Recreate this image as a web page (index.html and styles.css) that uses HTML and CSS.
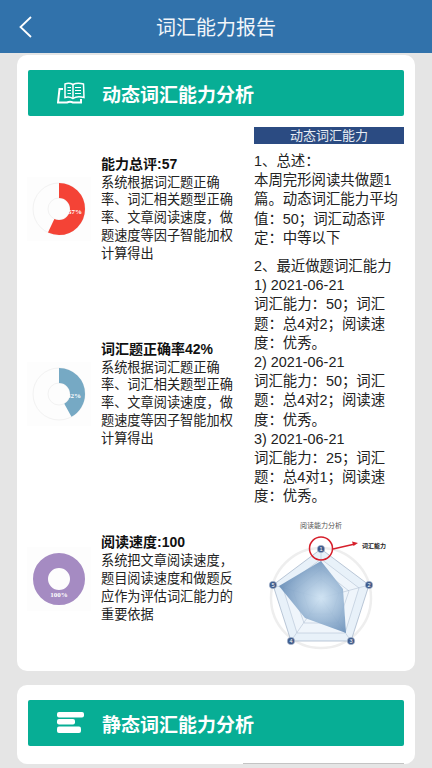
FILE: index.html
```html
<!DOCTYPE html>
<html lang="zh-CN">
<head>
    <meta charset="UTF-8">
    <meta name="viewport" content="width=device-width, initial-scale=1.0">
    <title>词汇能力报告</title>
    <link rel="stylesheet" href="styles.css">
</head>
<body>

    <header class="top-bar">
        <svg class="back-icon" viewBox="0 0 16 24" width="16" height="24">
            <path d="M13 2 L2.5 12 L13 22" fill="none" stroke="#fff" stroke-width="1.8"/>
        </svg>
        <h1 class="page-title">词汇能力报告</h1>
    </header>

    <main class="page">
        <section class="card">
            <div class="section-bar">
                <svg class="section-icon" viewBox="0 0 28 22" width="28" height="22">
                    <g fill="none" stroke="#fff">
                        <path d="M6 7 L2.500 7 L1 20.500 L10 20.500 Q13 19 16 20.500 L24 20.500 L24 17" stroke-width="2"/>
                        <path d="M8 2 Q12 0.500 16 2.500 Q20 0.500 26.500 2 L27 15.500 Q20 13.500 16 16.500 Q12 14 8 15.500 Z" stroke-width="1.500"/>
                        <path d="M16 2.500 L16 16.500" stroke-width="1.500"/>
                        <path d="M10.500 5.500 L14 5.500 M10.500 8.500 L14 8.500 M10.500 11.500 L14 11.500 M18 5.500 L24 5.500 M18 8.500 L24 8.500 M18 11.500 L24 11.500" stroke-width="1.200"/>
                    </g>
                </svg>
                <h2 class="section-title">动态词汇能力分析</h2>
            </div>

            <div class="analysis">
                <div class="factors">
                    <div class="factor">
                        <svg class="donut" viewBox="0 0 64 64" width="64" height="64">
                            <circle cx="32" cy="32" r="26" class="donut-edge"/>
                            <circle cx="32" cy="32" r="11" class="donut-edge"/>
                            <circle cx="32" cy="32" r="18.500" class="donut-value" stroke="#f44336" pathLength="100" stroke-dasharray="57 100" transform="rotate(-90 32 32)"/>
                            <text x="48" y="37" class="donut-label">57%</text>
                        </svg>
                        <div class="factor-text">
                            <h3 class="factor-title">能力总评:57</h3>
                            <p>系统根据词汇题正确率、词汇相关题型正确率、文章阅读速度&#xFF0C;做题速度等因子智能加权计算得出</p>
                        </div>
                    </div>

                    <div class="factor">
                        <svg class="donut" viewBox="0 0 64 64" width="64" height="64">
                            <circle cx="32" cy="32" r="26" class="donut-edge"/>
                            <circle cx="32" cy="32" r="11" class="donut-edge"/>
                            <circle cx="32" cy="32" r="18.500" class="donut-value" stroke="#76a9c4" pathLength="100" stroke-dasharray="42 100" transform="rotate(-90 32 32)"/>
                            <text x="47" y="36" class="donut-label">42%</text>
                        </svg>
                        <div class="factor-text">
                            <h3 class="factor-title">词汇题正确率42%</h3>
                            <p>系统根据词汇题正确率、词汇相关题型正确率、文章阅读速度&#xFF0C;做题速度等因子智能加权计算得出</p>
                        </div>
                    </div>

                    <div class="factor">
                        <svg class="donut" viewBox="0 0 64 64" width="64" height="64">
                            <circle cx="32" cy="32" r="18.500" class="donut-value" stroke="#a58bc2"/>
                            <text x="32" y="50" class="donut-label">100%</text>
                        </svg>
                        <div class="factor-text">
                            <h3 class="factor-title">阅读速度:100</h3>
                            <p>系统把文章阅读速度&#xFF0C;题目阅读速度和做题反应作为评估词汇能力的重要依据</p>
                        </div>
                    </div>
                </div>

                <aside class="summary">
                    <div class="summary-head">动态词汇能力</div>
                    <p>1、总述&#xFF1A;<br>本周完形阅读共做题1篇。动态词汇能力平均值&#xFF1A;50&#xFF1B;词汇动态评定&#xFF1A;中等以下</p>
                    <p class="summary-recent">2、最近做题词汇能力<br>1) 2021-06-21<br>词汇能力&#xFF1A;50&#xFF1B;词汇题&#xFF1A;总4对2&#xFF1B;阅读速度&#xFF1A;优秀。<br>2) 2021-06-21<br>词汇能力&#xFF1A;50&#xFF1B;词汇题&#xFF1A;总4对2&#xFF1B;阅读速度&#xFF1A;优秀。<br>3) 2021-06-21<br>词汇能力&#xFF1A;25&#xFF1B;词汇题&#xFF1A;总4对1&#xFF1B;阅读速度&#xFF1A;优秀。</p>

                    <svg class="radar" viewBox="0 0 150 150" width="150" height="150">
                        <defs>
                            <radialGradient id="radarFill" gradientUnits="userSpaceOnUse" cx="67" cy="88" r="48">
                                <stop offset="0" stop-color="#cfe3f3"/>
                                <stop offset="1" stop-color="#5b83b0"/>
                            </radialGradient>
                        </defs>
                        <text x="67" y="18" class="radar-title">阅读能力分析</text>
                        <circle cx="67" cy="88" r="50" fill="#fff" stroke="#eeeeee" stroke-width="2.500"/>
                        <polygon points="67,39 115,75 97,131 37,131 19,75" fill="#e8f1f9" stroke="#9fb0c6" stroke-width="0.700"/>
                        <polygon points="67,49 105,78 91,123 43,123 29,78" fill="#eff5fb" stroke="#a9b9cc" stroke-width="0.500"/>
                        <polygon points="67,59 95,81 84,113 50,113 39,81" fill="none" stroke="#a9b9cc" stroke-width="0.500"/>
                        <polygon points="67,69 85,83 78,104 56,104 49,83" fill="none" stroke="#a9b9cc" stroke-width="0.500"/>
                        <path d="M67 88 L67 39 M67 88 L115 75 M67 88 L97 131 M67 88 L37 131 M67 88 L19 75" stroke="#a9b9cc" stroke-width="0.500"/>
                        <polygon points="67,51 89,79 92,123 51,108 25,76" fill="url(#radarFill)" fill-opacity="0.92"/>
                        <g class="radar-dots">
                            <circle cx="67" cy="39" r="3.800"/>
                            <circle cx="115" cy="75" r="3.800"/>
                            <circle cx="97" cy="131" r="3.800"/>
                            <circle cx="37" cy="131" r="3.800"/>
                            <circle cx="19" cy="75" r="3.800"/>
                        </g>
                        <g class="radar-nums">
                            <text x="67" y="41">1</text>
                            <text x="115" y="77">2</text>
                            <text x="97" y="133">3</text>
                            <text x="37" y="133">4</text>
                            <text x="19" y="77">5</text>
                        </g>
                        <circle cx="67" cy="38.500" r="11.500" fill="none" stroke="#d61f2b" stroke-width="1.500"/>
                        <path d="M79 39 L101 34" stroke="#d61f2b" stroke-width="1.300"/>
                        <path d="M104 33 L98 31.500 L99.500 36 Z" fill="#d61f2b"/>
                        <text x="108" y="38" class="radar-callout">词汇能力</text>
                    </svg>
                </aside>
            </div>
        </section>

        <section class="card">
            <div class="section-bar">
                <svg class="section-icon" viewBox="0 0 28 22" width="28" height="22">
                    <g fill="#fff">
                        <rect x="0" y="0" width="27" height="5.500" rx="2"/>
                        <rect x="0" y="7" width="18" height="5.500" rx="2"/>
                        <rect x="0" y="14.500" width="24" height="6.500" rx="2"/>
                    </g>
                </svg>
                <h2 class="section-title">静态词汇能力分析</h2>
            </div>
            <div class="static-rule"></div>
        </section>
    </main>

</body>
</html>
```

FILE: styles.css
```css
html, body {
    margin: 0;
    padding: 0;
    height: 768px;
    overflow: hidden;
}
body {
    font-family: "Liberation Sans", "Noto Sans CJK SC", sans-serif;
    background-color: #e5e5e5;
    color: #222;
}
h1, h2, h3, p {
    margin: 0;
    font-weight: normal;
}
.top-bar {
    height: 53px;
    background-color: #3172ab;
    position: relative;
    display: flex;
    align-items: center;
    justify-content: center;
}
.back-icon {
    position: absolute;
    left: 18px;
    top: 15px;
}
.page-title {
    font-size: 20px;
    color: #f2f6fa;
}
.page {
    padding: 2px 17px 0;
}
.card {
    background-color: #fff;
    border-radius: 10px;
    padding: 15px 11px 0;
    margin-bottom: 14px;
}
.section-bar {
    height: 46px;
    background-color: #07ae95;
    border-radius: 2px;
    padding-left: 29px;
    display: flex;
    align-items: center;
    gap: 17px;
}
.section-title {
    font-size: 19px;
    font-weight: bold;
    color: #fff;
}
.analysis {
    display: flex;
    gap: 10px;
}
.factors {
    width: 216px;
}
.factor {
    height: 185px;
    display: flex;
    align-items: center;
    gap: 10px;
    margin-left: -1px;
}
.donut {
    flex: none;
    background-color: #fdfdfd;
}
.donut-edge {
    fill: none;
    stroke: #f2f2f2;
    stroke-width: 1;
}
.donut-value {
    fill: none;
    stroke-width: 15;
}
.donut-label {
    font-family: "Liberation Serif", serif;
    font-size: 7px;
    font-weight: bold;
    fill: #fff;
    text-anchor: middle;
}
.factor-text {
    width: 133px;
    font-size: 13.2px;
    line-height: 17.8px;
}
.factor-title {
    font-size: 14px;
    font-weight: bold;
    color: #111;
    line-height: 18px;
    margin-bottom: 1px;
}
.summary {
    width: 150px;
    padding-top: 11px;
    font-size: 14.4px;
    line-height: 19.2px;
}
.summary-head {
    height: 17px;
    line-height: 17px;
    background-color: #2b4b82;
    color: #e8edf4;
    font-size: 13px;
    text-align: center;
    margin-bottom: 8px;
}
.summary-recent {
    margin-top: 9px;
}
.radar {
    display: block;
    margin-top: 3px;
}
.radar-title {
    font-size: 7px;
    fill: #555;
    text-anchor: middle;
}
.radar-callout {
    font-size: 6px;
    font-weight: bold;
    fill: #222;
}
.radar-dots circle {
    fill: #3f5c8c;
    stroke: #d5dde8;
    stroke-width: 0.5;
}
.radar-nums text {
    font-family: "Liberation Sans", sans-serif;
    font-size: 5.5px;
    fill: #fff;
    text-anchor: middle;
}
.static-rule {
    height: 1px;
    background-color: #c4c4c4;
    margin: 17px 0 0 215px;
}
```
